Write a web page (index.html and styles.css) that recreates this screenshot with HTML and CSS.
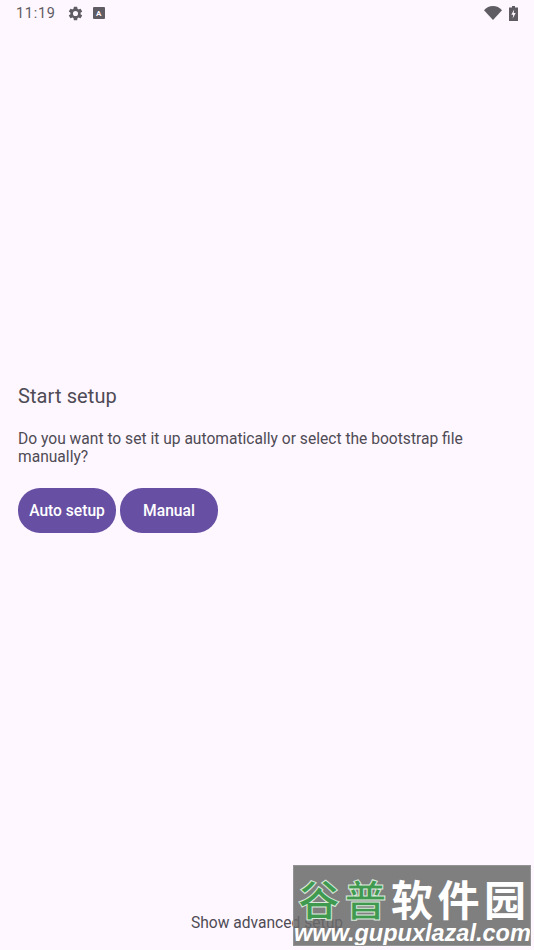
FILE: index.html
```html
<!DOCTYPE html>
<html lang="en">
<head>
  <meta charset="UTF-8">
  <meta name="viewport" content="width=device-width, initial-scale=1.0">
  <title>Start setup</title>
  <link rel="stylesheet" href="styles.css">
</head>
<body>
  <div class="screen">
    <header class="status-bar">
      <div class="status-left">
        <span class="clock">11:19</span>
        <svg class="icon-gear" viewBox="0 0 24 24"><path d="M19.14 12.94c.04-.3.06-.61.06-.94s-.02-.64-.07-.94l2.03-1.58a.49.49 0 0 0 .12-.61l-1.92-3.32a.49.49 0 0 0-.59-.22l-2.39.96a7 7 0 0 0-1.62-.94l-.36-2.54a.48.48 0 0 0-.48-.41h-3.84a.48.48 0 0 0-.47.41l-.36 2.54c-.59.24-1.13.57-1.62.94l-2.39-.96a.49.49 0 0 0-.59.22L2.74 8.87a.48.48 0 0 0 .12.61l2.03 1.58c-.05.3-.09.63-.09.94s.02.64.07.94l-2.03 1.58a.49.49 0 0 0-.12.61l1.92 3.32c.12.22.37.29.59.22l2.39-.96c.5.38 1.03.7 1.62.94l.36 2.54c.05.24.24.41.48.41h3.84c.24 0 .44-.17.47-.41l.36-2.54a7 7 0 0 0 1.62-.94l2.39.96c.22.08.47 0 .59-.22l1.92-3.32a.48.48 0 0 0-.12-.61l-2.01-1.58zM12 15.6a3.6 3.6 0 1 1 0-7.2 3.6 3.6 0 0 1 0 7.2z"/></svg>
        <span class="app-badge">A</span>
      </div>
      <div class="status-right">
        <svg class="icon-wifi" viewBox="0 0 18 14"><path d="M0 4.2C2.3 1.6 5.5 0 9 0s6.700 1.600 9 4.200L9 14z"/></svg>
        <svg class="icon-battery" viewBox="0 0 9 15"><path fill-rule="evenodd" d="M3 0h3v1.500h3V15H0V1.500h3zM5.200 3.500 2.300 8.800h1.900L3.700 12.500l3-5.500H4.700z"/></svg>
      </div>
    </header>

    <main class="setup">
      <h1>Start setup</h1>
      <p>Do you want to set it up automatically or select the bootstrap file manually?</p>
      <div class="setup-buttons">
        <button type="button" class="btn">Auto setup</button>
        <button type="button" class="btn">Manual</button>
      </div>
    </main>

    <footer class="advanced">Show advanced setup</footer>

    <div class="watermark">
      <div class="watermark-name"><span class="green">谷普</span>软件园</div>
      <div class="watermark-url">www.gupuxlazal.com</div>
    </div>
  </div>
</body>
</html>
```

FILE: styles.css
```css
* {
  box-sizing: border-box;
}

body {
  margin: 0;
  background-color: #fef7ff;
  font-family: Roboto, "Liberation Sans", sans-serif;
  color: #4f4b55;
}

.screen {
  position: relative;
  display: flex;
  flex-direction: column;
  height: 950px;
  overflow: hidden;
}

.status-bar {
  display: flex;
  justify-content: space-between;
  align-items: center;
  height: 26px;
  padding: 0 16px;
  color: #5f5c63;
}

.status-left,
.status-right {
  display: flex;
  align-items: center;
}

.clock {
  font-size: 14.500px;
  letter-spacing: 0.7px;
  margin-right: 12px;
}

.icon-gear {
  width: 17px;
  height: 17px;
  fill: #5f5c63;
  margin-right: 9px;
  margin-left: -1px;
}

.app-badge {
  display: flex;
  justify-content: center;
  align-items: center;
  width: 12px;
  height: 12px;
  border-radius: 1px;
  background-color: #5f5c63;
  color: #fef7ff;
  font-size: 8px;
  font-weight: 700;
}

.icon-wifi {
  width: 18px;
  height: 14px;
  fill: #5f5c63;
  margin-right: 7px;
}

.icon-battery {
  width: 9px;
  height: 15px;
  fill: #5f5c63;
}

.setup {
  flex: 1;
  display: flex;
  flex-direction: column;
  justify-content: center;
  padding: 0 18px 6px;
}

h1 {
  margin: 0 0 21px;
  font-size: 20px;
  font-weight: 400;
  letter-spacing: 0.1px;
  line-height: 26px;
}

p {
  margin: 0 0 22px;
  font-size: 15.600px;
  line-height: 18px;
}

.setup-buttons {
  display: flex;
  gap: 4px;
}

.btn {
  width: 98px;
  height: 45px;
  padding: 2px 0 0;
  border: none;
  border-radius: 22px;
  background-color: #674fa3;
  color: white;
  font-family: inherit;
  font-size: 15.600px;
  font-weight: 500;
}

.advanced {
  height: 55px;
  padding-top: 19px;
  text-align: center;
  font-size: 15.600px;
}

.watermark {
  position: absolute;
  left: 293px;
  top: 865px;
  width: 238px;
  height: 81px;
  padding-top: 8px;
  border: 1px solid rgba(150, 150, 150, 0.9);
  background-color: rgba(106, 106, 106, 0.85);
  color: white;
  font-family: "Noto Sans CJK SC", sans-serif;
  text-align: center;
  overflow: hidden;
}

.watermark-name {
  padding-left: 4px;
  font-size: 42px;
  font-weight: 700;
  letter-spacing: 4.500px;
  line-height: 47px;
  white-space: nowrap;
}

.green {
  color: #3f9a50;
  -webkit-text-stroke: 1px #d8e8da;
}

.watermark-url {
  font-family: "Liberation Sans", sans-serif;
  font-size: 23.500px;
  font-style: italic;
  font-weight: 700;
  line-height: 24px;
  white-space: nowrap;
}
```
